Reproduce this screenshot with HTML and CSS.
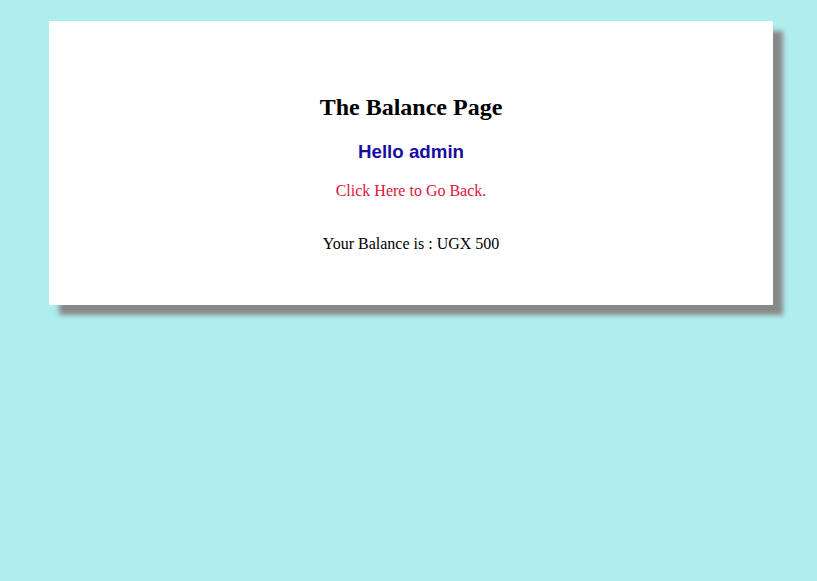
FILE: index.html
```html
<!DOCTYPE html>
<html>
<head>
<meta charset="utf-8">
<title>The Balance Page</title>
<link rel="stylesheet" href="styles.css">
</head>
<body>
<div class="card">
  <h2 class="title">The Balance Page</h2>
  <h3 class="hello">Hello admin</h3>
  <p class="back"><a href="#" class="back-link">Click Here to Go Back.</a></p>
  <p class="balance">Your Balance is : UGX 500</p>
</div>
</body>
</html>
```
FILE: styles.css
```css
html {
  margin: 0;
  padding: 0;
  min-height: 100%;
  background: #afeeee;
}
body {
  margin: 0;
  min-height: 581px;
  box-sizing: border-box;
  background: #afeeee;
  font-family: "Liberation Serif", "Times New Roman", serif;
  font-size: 16px;
  padding: 21px 44px 0 49px;
}
.card {
  background: #ffffff;
  width: 724px;
  height: 284px;
  box-sizing: border-box;
  padding: 53px 0 0;
  text-align: center;
  box-shadow: 10px 10px 5px #888888;
}
.title {
  font-size: 24px;
  font-weight: bold;
  margin: 20px 0;
  color: #000;
}
.hello {
  font-family: "Liberation Sans", Arial, sans-serif;
  font-size: 18.72px;
  font-weight: bold;
  color: #1a0ca3;
  margin: 18.72px 0;
}
.back {
  margin: 18.72px 0 0;
}
.back-link {
  color: #dc143c;
  text-decoration: none;
}
.balance {
  margin: 35px 0 0;
  color: #000;
}
```
